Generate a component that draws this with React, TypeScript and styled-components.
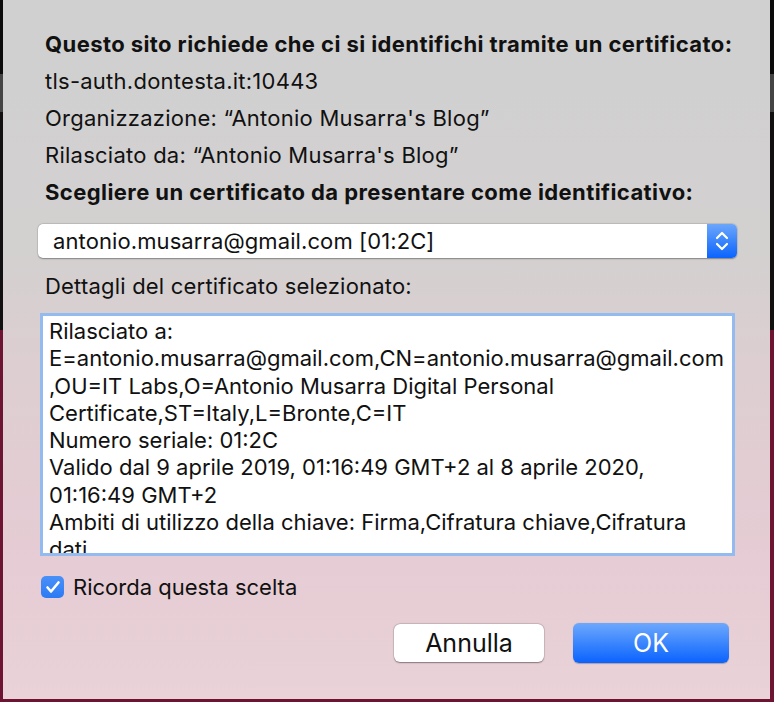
import React from "react";
import styled, { createGlobalStyle } from "styled-components";

const Global = createGlobalStyle`
  html, body { margin: 0; padding: 0; }
  body {
    width: 774px;
    height: 702px;
    overflow: hidden;
    background: linear-gradient(to bottom, #0b0b0b 0 74px, #444 74px 112px, #121010 112px 330px, #6c1431 330px 100%);
    font-family: Inter, "Noto Sans", "Liberation Sans", sans-serif;
  }
`;

const Stage = styled.div`
  padding: 0 4px 3px 3px;
`;

const Dialog = styled.div`
  box-sizing: border-box;
  width: 767px;
  height: 699px;
  padding: 26px 41px 0 42px;
  display: flex;
  flex-direction: column;
  background: linear-gradient(
    to bottom,
    #d0d0d0 0px,
    #d3d0d0 250px,
    #dcced1 360px,
    #e6ccd4 560px,
    #e9d2d8 699px
  );
  color: #111;
`;

const Line = styled.div<{ $bold?: boolean }>`
  font-size: 22px;
  line-height: 37px;
  height: 37px;
  white-space: nowrap;
  font-weight: ${(p) => (p.$bold ? 700 : 400)};
  letter-spacing: ${(p) => (p.$bold ? "0.42px" : "0.25px")};
`;

const Popup = styled.div`
  margin: 13px 0 0 -7px;
  width: 699px;
  height: 34px;
  box-sizing: border-box;
  display: flex;
  border-radius: 5px;
  background: #fff;
  box-shadow: 0 0.5px 1.5px rgba(0, 0, 0, 0.35), 0 0 0 0.5px rgba(0, 0, 0, 0.08);
  overflow: hidden;
`;

const PopupText = styled.div`
  flex: 1;
  padding-left: 15px;
  font-size: 22px;
  letter-spacing: 0.1px;
  line-height: 34px;
  white-space: nowrap;
  color: #111;
`;

const Stepper = styled.div`
  width: 30px;
  display: flex;
  align-items: center;
  justify-content: center;
  background: linear-gradient(to bottom, #6ba6fb, #0b64fd);
`;

const Label = styled.div`
  margin-top: 10px;
  font-size: 22px;
  letter-spacing: 0.2px;
  line-height: 37px;
  height: 37px;
  white-space: nowrap;
`;

const Details = styled.div`
  margin: 8px 0 0 -5px;
  width: 695px;
  height: 243px;
  box-sizing: border-box;
  border: 3px solid #94bbf0;
  background: #fff;
  padding: 2px 0 0 6px;
  overflow: hidden;
`;

const DetailLine = styled.div`
  font-size: 22px;
  line-height: 27.3px;
  white-space: nowrap;
  color: #111;
`;

const CheckRow = styled.label`
  margin: 20px 0 0 -4px;
  display: flex;
  align-items: center;
  gap: 9px;
  font-size: 22px;
  height: 22px;
  white-space: nowrap;
`;

const Box = styled.span`
  width: 23px;
  height: 22px;
  border-radius: 5px;
  background: linear-gradient(to bottom, #4a90f8, #2b7af5);
  display: flex;
  align-items: center;
  justify-content: center;
`;

const Buttons = styled.div`
  margin-top: 25px;
  display: flex;
  justify-content: flex-end;
  align-items: center;
  gap: 29px;
`;

const Button = styled.button<{ $primary?: boolean }>`
  font-family: inherit;
  font-size: 25px;
  border: none;
  border-radius: 6px;
  cursor: default;
  width: ${(p) => (p.$primary ? "156px" : "150px")};
  height: ${(p) => (p.$primary ? "40px" : "38px")};
  color: ${(p) => (p.$primary ? "#fff" : "#111")};
  background: ${(p) =>
    p.$primary ? "linear-gradient(to bottom, #6da8fc, #0a63fe)" : "#fff"};
  box-shadow: ${(p) =>
    p.$primary
      ? "0 0.5px 1px rgba(0,0,0,0.25)"
      : "0 0.5px 1.5px rgba(0,0,0,0.4), 0 0 0 0.5px rgba(0,0,0,0.12)"};
  padding: 0;
`;

const details = [
  "Rilasciato a:",
  "E=antonio.musarra@gmail.com,CN=antonio.musarra@gmail.com",
  ",OU=IT Labs,O=Antonio Musarra Digital Personal",
  "Certificate,ST=Italy,L=Bronte,C=IT",
  "Numero seriale: 01:2C",
  "Valido dal 9 aprile 2019, 01:16:49 GMT+2 al 8 aprile 2020,",
  "01:16:49 GMT+2",
  "Ambiti di utilizzo della chiave: Firma,Cifratura chiave,Cifratura",
  "dati",
];

export default function App() {
  return (
    <Stage>
      <Global />
      <Dialog>
        <Line $bold>Questo sito richiede che ci si identifichi tramite un certificato:</Line>
        <Line>tls-auth.dontesta.it:10443</Line>
        <Line>Organizzazione: “Antonio Musarra's Blog”</Line>
        <Line>Rilasciato da: “Antonio Musarra's Blog”</Line>
        <Line $bold>Scegliere un certificato da presentare come identificativo:</Line>
        <Popup>
          <PopupText>antonio.musarra@gmail.com [01:2C]</PopupText>
          <Stepper>
            <svg width="16" height="24" viewBox="0 0 16 24" fill="none" stroke="#fff" strokeWidth="2.2" strokeLinecap="round" strokeLinejoin="round">
              <path d="M3 9 L8 4 L13 9" />
              <path d="M3 15 L8 20 L13 15" />
            </svg>
          </Stepper>
        </Popup>
        <Label>Dettagli del certificato selezionato:</Label>
        <Details>
          {details.map((d, i) => (
            <DetailLine key={i}>{d}</DetailLine>
          ))}
        </Details>
        <CheckRow>
          <Box>
            <svg width="16" height="14" viewBox="0 0 16 14" fill="none" stroke="#fff" strokeWidth="2.6" strokeLinecap="round" strokeLinejoin="round">
              <path d="M2.5 7.5 L6 11.5 L13.5 2.5" />
            </svg>
          </Box>
          Ricorda questa scelta
        </CheckRow>
        <Buttons>
          <Button>Annulla</Button>
          <Button $primary>OK</Button>
        </Buttons>
      </Dialog>
    </Stage>
  );
}
